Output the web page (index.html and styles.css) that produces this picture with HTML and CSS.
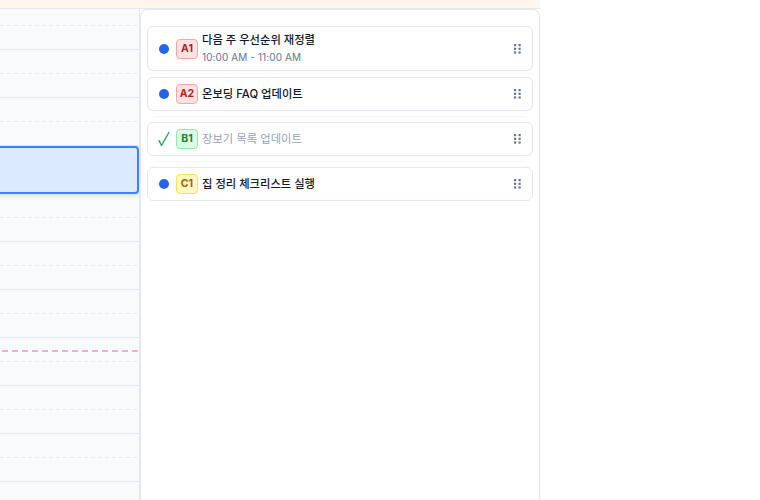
FILE: index.html
```html
<!DOCTYPE html>
<html lang="ko">
<head>
<meta charset="utf-8">
<title>Schedule</title>
<link rel="stylesheet" href="styles.css">
</head>
<body>
<div class="app">
  <div class="strip"></div>
  <div class="main">
    <div class="grid">
      <div class="slots">
        <div class="slot"><div class="half"></div></div>
        <div class="slot"><div class="half"></div></div>
        <div class="slot"><div class="half"></div></div>
        <div class="slot"><div class="half"></div></div>
        <div class="slot"><div class="half"></div></div>
        <div class="slot"><div class="half"></div></div>
        <div class="slot"><div class="half"></div></div>
        <div class="slot"><div class="half"></div></div>
        <div class="slot"><div class="half"></div></div>
        <div class="slot"><div class="half"></div></div>
        <div class="slot"><div class="half"></div></div>
      </div>
      <div class="selection"></div>
      <div class="now-line"></div>
    </div>
    <div class="panel">
      <div class="list">
        <div class="card">
          <span class="status"><span class="dot"></span></span>
          <span class="badge badge-a">A1</span>
          <div class="text">
            <div class="title">다음 주 우선순위 재정렬</div>
            <div class="time">10:00 AM - 11:00 AM</div>
          </div>
          <svg class="handle" width="7" height="10" viewBox="0 0 7 10"><rect x="0" y="0" width="2.2" height="2.2"/><rect x="4.5" y="0" width="2.2" height="2.2"/><rect x="0" y="3.7" width="2.2" height="2.2"/><rect x="4.5" y="3.7" width="2.2" height="2.2"/><rect x="0" y="7.4" width="2.2" height="2.2"/><rect x="4.5" y="7.4" width="2.2" height="2.2"/></svg>
        </div>
        <div class="card">
          <span class="status"><span class="dot"></span></span>
          <span class="badge badge-a">A2</span>
          <div class="text">
            <div class="title">온보딩 FAQ 업데이트</div>
          </div>
          <svg class="handle" width="7" height="10" viewBox="0 0 7 10"><rect x="0" y="0" width="2.2" height="2.2"/><rect x="4.5" y="0" width="2.2" height="2.2"/><rect x="0" y="3.7" width="2.2" height="2.2"/><rect x="4.5" y="3.7" width="2.2" height="2.2"/><rect x="0" y="7.4" width="2.2" height="2.2"/><rect x="4.5" y="7.4" width="2.2" height="2.2"/></svg>
        </div>
        <div class="divider"></div>
        <div class="card">
          <span class="status"><svg class="check" width="13" height="16" viewBox="0 0 13 16"><polyline points="1.2,9.8 3.8,15 11.8,1"/></svg></span>
          <span class="badge badge-b">B1</span>
          <div class="text">
            <div class="title done">장보기 목록 업데이트</div>
          </div>
          <svg class="handle" width="7" height="10" viewBox="0 0 7 10"><rect x="0" y="0" width="2.2" height="2.2"/><rect x="4.5" y="0" width="2.2" height="2.2"/><rect x="0" y="3.7" width="2.2" height="2.2"/><rect x="4.5" y="3.7" width="2.2" height="2.2"/><rect x="0" y="7.4" width="2.2" height="2.2"/><rect x="4.5" y="7.4" width="2.2" height="2.2"/></svg>
        </div>
        <div class="divider"></div>
        <div class="card">
          <span class="status"><span class="dot"></span></span>
          <span class="badge badge-c">C1</span>
          <div class="text">
            <div class="title">집 정리 체크리스트 실행</div>
          </div>
          <svg class="handle" width="7" height="10" viewBox="0 0 7 10"><rect x="0" y="0" width="2.2" height="2.2"/><rect x="4.5" y="0" width="2.2" height="2.2"/><rect x="0" y="3.7" width="2.2" height="2.2"/><rect x="4.5" y="3.7" width="2.2" height="2.2"/><rect x="0" y="7.4" width="2.2" height="2.2"/><rect x="4.5" y="7.4" width="2.2" height="2.2"/></svg>
        </div>
      </div>
    </div>
  </div>
</div>
</body>
</html>
```
FILE: styles.css
```css
* { box-sizing: border-box; }
html, body { margin: 0; padding: 0; background: #ffffff; }
body {
  font-family: Inter, "Noto Sans CJK KR", sans-serif;
  color: #0f172a;
  height: 500px;
  overflow: hidden;
}
.app {
  width: 540px;
  height: 500px;
  display: flex;
  flex-direction: column;
}
.strip {
  height: 9px;
  flex: none;
  background: #fff7ed;
  border-bottom: 1px solid #e2e8f0;
}
.main {
  flex: 1;
  display: flex;
  min-height: 0;
}
.grid {
  position: relative;
  width: 140px;
  flex: none;
  background: #f8fafc;
  border-right: 1px solid #e2e8f0;
  overflow: hidden;
}
.slots { margin-top: -7px; }
.slot {
  height: 48px;
  border-bottom: 1px solid #e2e8f0;
}
.half {
  height: 24px;
  background: repeating-linear-gradient(to right, #e5e7eb 0 4px, transparent 4px 7px) bottom / 100% 1px no-repeat;
}
.selection {
  position: absolute;
  top: 137px;
  left: -8px;
  right: 0;
  height: 48px;
  background: #dbeafe;
  border: 2px solid #3b82f6;
  border-radius: 4px;
  box-shadow: 0 2px 5px rgba(15, 23, 42, 0.12);
}
.now-line {
  position: absolute;
  top: 341px;
  left: 0;
  right: 0;
  height: 2px;
  background: repeating-linear-gradient(to right, transparent 0 2px, #f9a8d4 2px 8px, transparent 8px 10px);
}
.panel {
  flex: none;
  width: 400px;
  background: #ffffff;
  border: 1px solid #e2e8f0;
  border-bottom: none;
  border-radius: 7px 7px 0 0;
  padding: 16px 6px 0 6px;
}
.list {
  display: flex;
  flex-direction: column;
  gap: 6px;
}
.card {
  display: flex;
  align-items: center;
  min-height: 34px;
  padding: 5px 10px;
  border: 1px solid #e2e8f0;
  border-radius: 6px;
  background: #ffffff;
}
.status {
  width: 12px;
  flex: none;
  display: flex;
  justify-content: center;
  align-items: center;
  margin-right: 6px;
}
.dot {
  width: 10px;
  height: 10px;
  border-radius: 50%;
  background: #2563eb;
}
.check polyline {
  fill: none;
  stroke: #16a34a;
  stroke-width: 1.4;
  stroke-linejoin: round;
  stroke-linecap: round;
}
.badge {
  flex: none;
  width: 22px;
  height: 20px;
  border-radius: 4px;
  border: 1px solid;
  font-size: 10.5px;
  font-weight: 700;
  line-height: 18px;
  text-align: center;
  margin-right: 4px;
}
.badge-a { background: #fee2e2; border-color: #fca5a5; color: #b91c1c; }
.badge-b { background: #dcfce7; border-color: #86efac; color: #15803d; }
.badge-c { background: #fef9c3; border-color: #fde047; color: #a16207; }
.text { flex: 1; min-width: 0; }
.title {
  font-size: 11.3px;
  font-weight: 500;
  line-height: 17px;
  color: #0f172a;
}
.title.done { color: #94a3b8; font-weight: 400; }
.time {
  font-size: 10px;
  font-weight: 400;
  line-height: 15px;
  margin-top: 1px;
  color: #64748b;
  letter-spacing: 0.1px;
}
.handle {
  flex: none;
  fill: #64748b;
  margin-left: 8px;
  margin-right: 1px;
}
.divider {
  height: 1px;
  margin: -1px 8px -1px 8px;
  background: #f1f5f9;
}
```
